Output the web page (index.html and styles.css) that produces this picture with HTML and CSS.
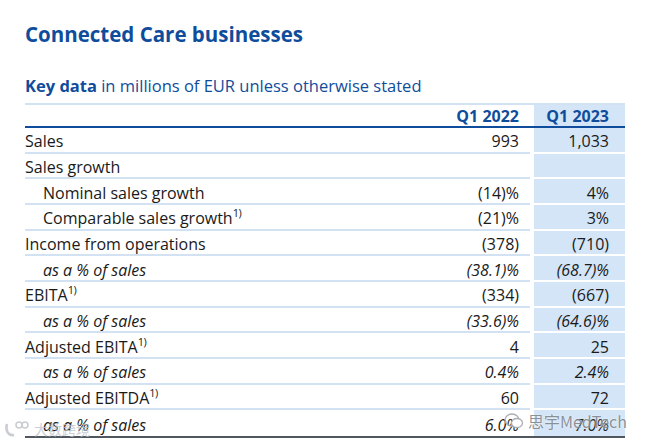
FILE: index.html
```html
<!DOCTYPE html>
<html lang="en">
<head>
<meta charset="utf-8">
<title>Connected Care businesses</title>
<link rel="stylesheet" href="styles.css">
</head>
<body>
<main class="page">
  <h1 class="title">Connected Care businesses</h1>
  <p class="caption"><strong>Key data</strong> in millions of EUR unless otherwise stated</p>
  <div class="table">
    <div class="row head">
      <div class="label"></div>
      <div class="v1">Q1 2022</div>
      <div class="v2">Q1 2023</div>
    </div>
    <div class="row">
      <div class="label">Sales</div>
      <div class="v1">993</div>
      <div class="v2">1,033</div>
    </div>
    <div class="row">
      <div class="label">Sales growth</div>
      <div class="v1"></div>
      <div class="v2"></div>
    </div>
    <div class="row">
      <div class="label indent">Nominal sales growth</div>
      <div class="v1">(14)%</div>
      <div class="v2">4%</div>
    </div>
    <div class="row">
      <div class="label indent"><span>Comparable sales growth<sup>1)</sup></span></div>
      <div class="v1">(21)%</div>
      <div class="v2">3%</div>
    </div>
    <div class="row">
      <div class="label">Income from operations</div>
      <div class="v1">(378)</div>
      <div class="v2">(710)</div>
    </div>
    <div class="row italic">
      <div class="label indent">as a % of sales</div>
      <div class="v1">(38.1)%</div>
      <div class="v2">(68.7)%</div>
    </div>
    <div class="row">
      <div class="label"><span>EBITA<sup>1)</sup></span></div>
      <div class="v1">(334)</div>
      <div class="v2">(667)</div>
    </div>
    <div class="row italic">
      <div class="label indent">as a % of sales</div>
      <div class="v1">(33.6)%</div>
      <div class="v2">(64.6)%</div>
    </div>
    <div class="row">
      <div class="label"><span>Adjusted EBITA<sup>1)</sup></span></div>
      <div class="v1">4</div>
      <div class="v2">25</div>
    </div>
    <div class="row italic">
      <div class="label indent">as a % of sales</div>
      <div class="v1">0.4%</div>
      <div class="v2">2.4%</div>
    </div>
    <div class="row">
      <div class="label"><span>Adjusted EBITDA<sup>1)</sup></span></div>
      <div class="v1">60</div>
      <div class="v2">72</div>
    </div>
    <div class="row italic last">
      <div class="label indent">as a % of sales</div>
      <div class="v1">6.0%</div>
      <div class="v2">7.0%</div>
    </div>
  </div>
  <div class="wm wm-right">
    <svg class="wm-icon" viewBox="0 0 20 18" width="20" height="18" aria-hidden="true">
      <ellipse cx="8" cy="8" rx="7" ry="6" fill="none" stroke="#a9aeb5" stroke-width="1.3"/>
      <ellipse cx="13" cy="11" rx="5.5" ry="4.5" fill="#fff" stroke="#a9aeb5" stroke-width="1.3"/>
    </svg>
    <span>思宇MedTech</span>
  </div>
  <div class="wm wm-left">
    <svg class="wm-icon" viewBox="0 0 26 18" width="26" height="18" aria-hidden="true">
      <path d="M3 4 C1 10 4 16 10 15" fill="none" stroke="#c9cdd2" stroke-width="2.5"/>
      <circle cx="15" cy="5" r="3" fill="none" stroke="#c9cdd2" stroke-width="1.5"/>
      <circle cx="21" cy="5" r="3" fill="none" stroke="#c9cdd2" stroke-width="1.5"/>
    </svg>
    <span>大数跨境</span>
  </div>
</main>
</body>
</html>
```

FILE: styles.css
```css
html, body {
  margin: 0;
  padding: 0;
  background: #ffffff;
}

.page {
  position: relative;
  width: 651px;
  height: 447px;
  padding: 20px 0 0 25px;
  box-sizing: border-box;
  font-family: "Open Sans", "Noto Sans", sans-serif;
  color: #1a1a1a;
  overflow: hidden;
}

.title {
  margin: 0;
  font-size: 20.5px;
  line-height: 28px;
  font-weight: 700;
  color: #0f4d9c;
}

.caption {
  margin: 26px 0 0 0;
  font-size: 16.5px;
  line-height: 24px;
  color: #0f4d9c;
}

.caption strong {
  font-weight: 700;
}

.table {
  width: 600px;
  margin-top: 5px;
  font-size: 16px;
}

.row {
  display: grid;
  grid-template-columns: 1fr 110px 91px;
  height: 25.67px;
}

.row > div {
  box-sizing: border-box;
  display: flex;
  align-items: center;
  padding-top: 3px;
  line-height: 20px;
  white-space: nowrap;
}

.label,
.v1 {
  border-bottom: 2px solid #d2e2f3;
}

.v1 {
  justify-content: flex-end;
  padding-right: 11px;
  margin-right: 4px;
}

.v2 {
  justify-content: flex-end;
  padding-right: 16px;
  background: #d3e5f7;
  border-bottom: 2px solid #ffffff;
}

.indent {
  padding-left: 18px;
}

.italic > div {
  font-style: italic;
}

sup {
  font-size: 11px;
  line-height: 0;
  vertical-align: baseline;
  position: relative;
  top: -7px;
  letter-spacing: -0.5px;
}

.head {
  height: 25px;
  border-top: 2px solid #d2e2f3;
  border-bottom: 2px solid #0f4d9c;
  box-sizing: border-box;
}

.head > div {
  border-bottom: 0;
  padding-top: 0;
  font-weight: 700;
  color: #0f4d9c;
  font-size: 16px;
}

.head .label,
.head .v1 {
  border-bottom: 0;
}

.last {
  border-bottom: 2px solid #50575f;
  height: 27.67px;
  box-sizing: border-box;
}

.last > div {
  border-bottom: 0;
}

.wm {
  position: absolute;
  display: flex;
  align-items: center;
  gap: 4px;
  font-family: "Noto Sans CJK SC", "Noto Sans", sans-serif;
  white-space: nowrap;
}

.wm-right {
  left: 504px;
  top: 409px;
  font-size: 16px;
  color: rgba(120, 126, 134, 0.85);
  text-shadow: 0 0 2px #fff;
}

.wm-left {
  left: 4px;
  top: 419px;
  font-size: 14px;
  color: rgba(190, 195, 200, 0.8);
}
```
